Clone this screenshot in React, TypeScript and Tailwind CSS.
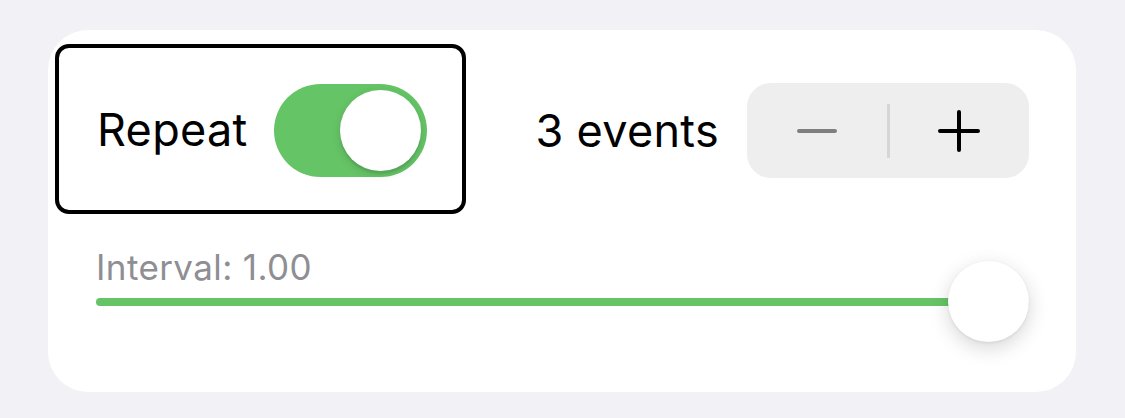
import React from "react";

const font = { fontFamily: "Inter, 'Noto Sans', sans-serif" };

const Toggle = () => (
  <div className="relative mt-[3px] h-[93px] w-[153px] rounded-full bg-[#65c466]">
    <div className="absolute right-[6px] top-[6px] h-[81px] w-[81px] rounded-full bg-white shadow-[0_3px_8px_rgba(0,0,0,0.15),0_3px_1px_rgba(0,0,0,0.06)]" />
  </div>
);

const Stepper = () => (
  <div className="flex h-[95px] w-[282px] items-center rounded-[24px] bg-[#eeeeef]">
    <div className="flex flex-1 items-center justify-center">
      <svg width="40" height="40" viewBox="0 0 40 40">
        <path d="M2 20h36" stroke="#7f7f7f" strokeWidth="4" strokeLinecap="round" />
      </svg>
    </div>
    <div className="h-[54px] w-[3px] bg-[#d6d6d6]" />
    <div className="flex flex-1 items-center justify-center">
      <svg width="42" height="42" viewBox="0 0 42 42">
        <path d="M2 21h38M21 2v38" stroke="#000" strokeWidth="4" strokeLinecap="round" />
      </svg>
    </div>
  </div>
);

export default function App() {
  return (
    <div className="h-[418px] w-[1125px] bg-[#f1f1f6] pl-[48px] pt-[30px]" style={font}>
      <div className="flex h-[362px] w-[1028px] flex-col rounded-[40px] bg-white">
        <div className="flex items-center pl-[7px] pr-[47px] pt-[14px]">
          <div className="flex h-[170px] w-[411px] items-center rounded-[14px] border-4 border-black pl-[38px]">
            <span className="w-[177px] text-[45px] leading-none tracking-[0.3px] text-black">Repeat</span>
            <Toggle />
          </div>
          <div className="ml-auto mt-[3px] flex items-center gap-[28px]">
            <span className="text-[45px] leading-none tracking-[0.3px] text-black">3 events</span>
            <Stepper />
          </div>
        </div>
        <div className="mx-[47px] mt-[36px] pl-[1px]">
          <div className="text-[35px] leading-none tracking-[0.4px] text-[#8e8e93]">Interval: 1.00</div>
          <div className="relative mt-[13px] h-[8px]">
            <div className="h-[8px] w-full rounded-full bg-[#65c466]" />
            <div className="absolute right-0 top-[-37px] h-[81px] w-[81px] rounded-full bg-white shadow-[0_6px_20px_rgba(0,0,0,0.16),0_1px_3px_rgba(0,0,0,0.08)]" />
          </div>
        </div>
      </div>
    </div>
  );
}
